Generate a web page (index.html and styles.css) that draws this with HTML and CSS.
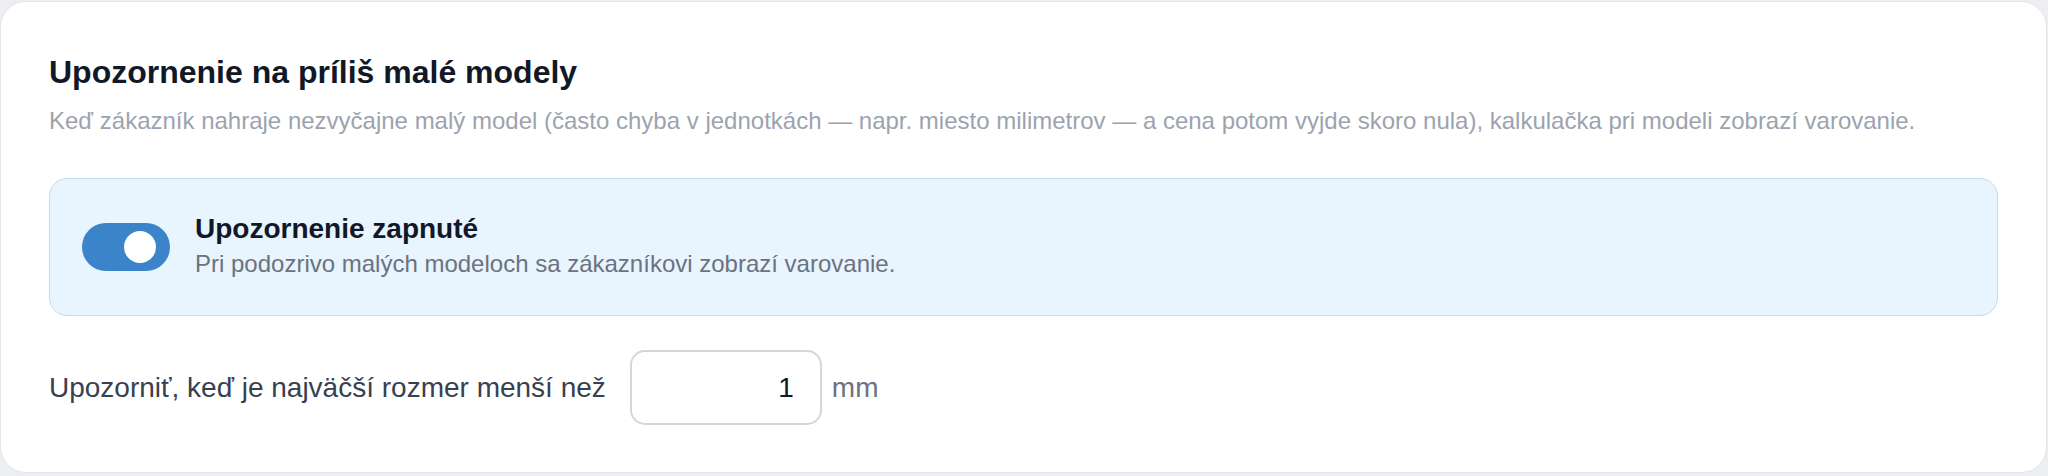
FILE: index.html
```html
<!DOCTYPE html>
<html lang="sk">
<head>
<meta charset="utf-8">
<title>Upozornenie na príliš malé modely</title>
<link rel="stylesheet" href="styles.css">
</head>
<body>
<section class="card">
  <h2 class="title">Upozornenie na príliš malé modely</h2>
  <p class="desc">Keď zákazník nahraje nezvyčajne malý model (často chyba v jednotkách — napr. miesto milimetrov — a cena potom vyjde skoro nula), kalkulačka pri modeli zobrazí varovanie.</p>
  <div class="notice">
    <span class="toggle" role="switch" aria-checked="true"><span class="knob"></span></span>
    <div class="notice-text">
      <div class="notice-title">Upozornenie zapnuté</div>
      <div class="notice-sub">Pri podozrivo malých modeloch sa zákazníkovi zobrazí varovanie.</div>
    </div>
  </div>
  <div class="row">
    <label class="row-label" for="minsize">Upozorniť, keď je najväčší rozmer menší než</label>
    <input class="num" id="minsize" type="text" value="1">
    <span class="unit">mm</span>
  </div>
</section>
</body>
</html>
```

FILE: styles.css
```css
html, body {
  margin: 0;
  padding: 0;
}
body {
  background: #eceef2;
  font-family: "Liberation Sans", Arial, sans-serif;
  padding: 1px 1px 1px 0;
}
.card {
  background: #ffffff;
  border: 1.5px solid #e3e5e9;
  border-radius: 26px;
  padding: 51px 48px 47px 48px;
}
.title {
  margin: 0;
  font-size: 32px;
  line-height: 38px;
  font-weight: 700;
  color: #111827;
}
.desc {
  margin: 14px 0 0 0;
  font-size: 24px;
  line-height: 32px;
  color: #9ca3af;
}
.notice {
  margin-top: 41px;
  height: 138px;
  box-sizing: border-box;
  display: flex;
  align-items: center;
  gap: 25px;
  padding: 0 32px;
  background: #e8f4fe;
  border: 1.5px solid #c2dcf7;
  border-radius: 18px;
}
.toggle {
  position: relative;
  flex: none;
  width: 88px;
  height: 48px;
  border-radius: 24px;
  background: #3b84c9;
}
.knob {
  position: absolute;
  left: 42px;
  top: 8px;
  width: 32px;
  height: 32px;
  border-radius: 50%;
  background: #ffffff;
}
.notice-text {
  display: flex;
  flex-direction: column;
  gap: 2px;
  margin-bottom: 3px;
}
.notice-title {
  font-size: 28px;
  line-height: 34px;
  font-weight: 700;
  color: #111827;
}
.notice-sub {
  font-size: 24px;
  line-height: 32px;
  color: #6b7280;
}
.row {
  margin-top: 34px;
  display: flex;
  align-items: center;
}
.row-label {
  font-size: 28px;
  line-height: 34px;
  color: #374151;
}
.num {
  margin-left: 24px;
  width: 192px;
  height: 75px;
  box-sizing: border-box;
  border: 2px solid #d3d6dc;
  border-radius: 15px;
  padding: 0 26px;
  text-align: right;
  font-family: "Liberation Sans", Arial, sans-serif;
  font-size: 28px;
  color: #111827;
  background: #ffffff;
  outline: none;
}
.unit {
  margin-left: 10px;
  font-size: 28px;
  line-height: 34px;
  color: #6b7280;
}
```
